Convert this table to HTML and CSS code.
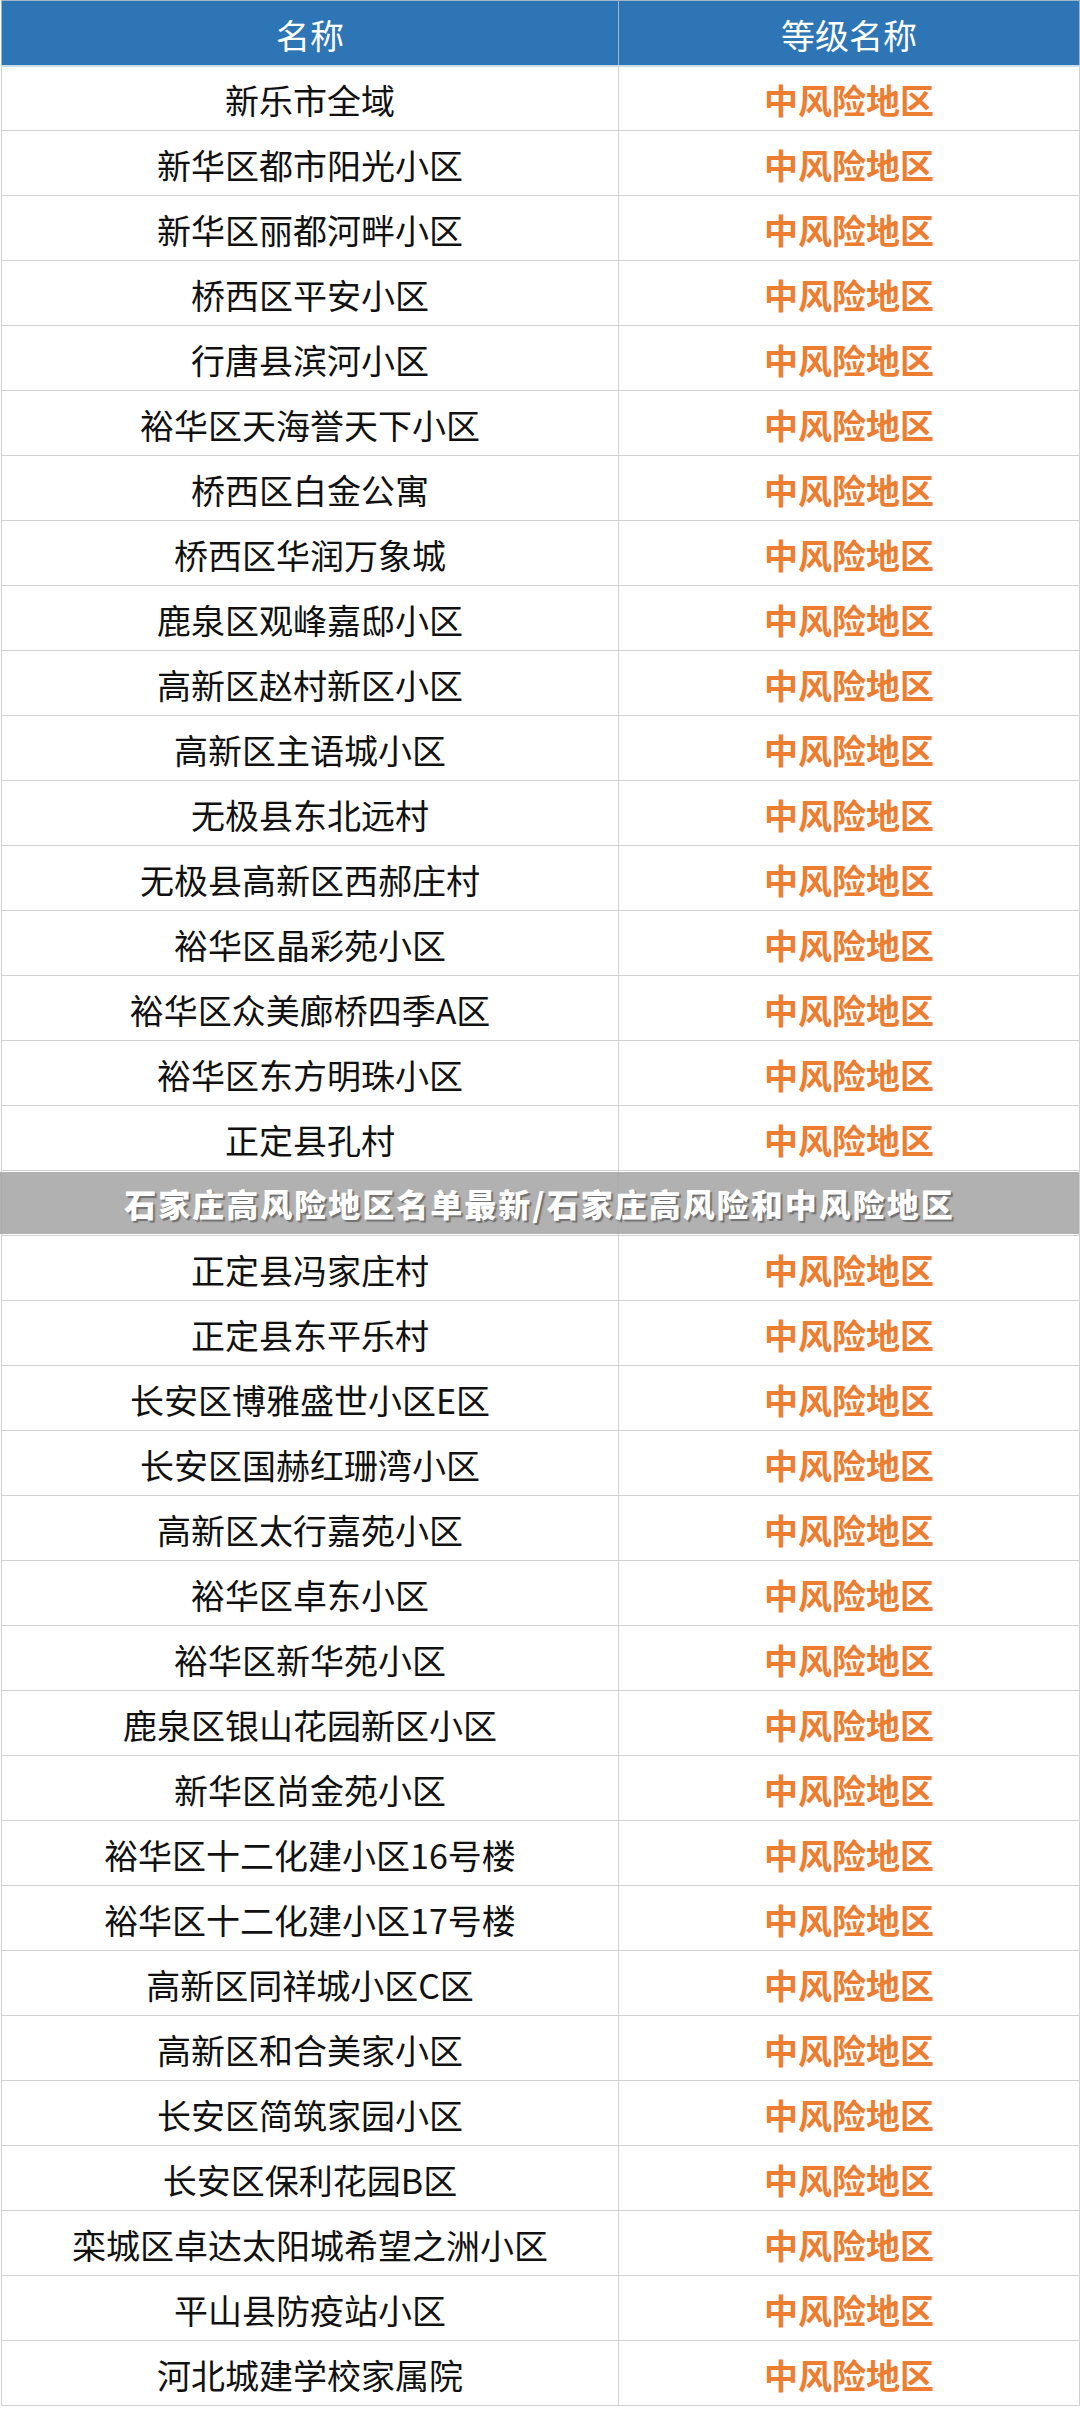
FILE: index.html
```html
<!DOCTYPE html>
<html lang="zh-CN">
<head>
<meta charset="utf-8">
<title>石家庄高风险地区名单</title>
<link rel="stylesheet" href="styles.css">
</head>
<body>
<div class="page">
<table class="risk">
  <colgroup><col class="c-name"><col class="c-level"></colgroup>
  <thead>
    <tr><th>名称</th><th>等级名称</th></tr>
  </thead>
  <tbody>
    <tr><td>新乐市全域</td><td class="lv">中风险地区</td></tr>
    <tr><td>新华区都市阳光小区</td><td class="lv">中风险地区</td></tr>
    <tr><td>新华区丽都河畔小区</td><td class="lv">中风险地区</td></tr>
    <tr><td>桥西区平安小区</td><td class="lv">中风险地区</td></tr>
    <tr><td>行唐县滨河小区</td><td class="lv">中风险地区</td></tr>
    <tr><td>裕华区天海誉天下小区</td><td class="lv">中风险地区</td></tr>
    <tr><td>桥西区白金公寓</td><td class="lv">中风险地区</td></tr>
    <tr><td>桥西区华润万象城</td><td class="lv">中风险地区</td></tr>
    <tr><td>鹿泉区观峰嘉邸小区</td><td class="lv">中风险地区</td></tr>
    <tr><td>高新区赵村新区小区</td><td class="lv">中风险地区</td></tr>
    <tr><td>高新区主语城小区</td><td class="lv">中风险地区</td></tr>
    <tr><td>无极县东北远村</td><td class="lv">中风险地区</td></tr>
    <tr><td>无极县高新区西郝庄村</td><td class="lv">中风险地区</td></tr>
    <tr><td>裕华区晶彩苑小区</td><td class="lv">中风险地区</td></tr>
    <tr><td>裕华区众美廊桥四季A区</td><td class="lv">中风险地区</td></tr>
    <tr><td>裕华区东方明珠小区</td><td class="lv">中风险地区</td></tr>
    <tr><td>正定县孔村</td><td class="lv">中风险地区</td></tr>
    <tr class="covered"><td></td><td class="lv"></td></tr>
    <tr><td>正定县冯家庄村</td><td class="lv">中风险地区</td></tr>
    <tr><td>正定县东平乐村</td><td class="lv">中风险地区</td></tr>
    <tr><td>长安区博雅盛世小区E区</td><td class="lv">中风险地区</td></tr>
    <tr><td>长安区国赫红珊湾小区</td><td class="lv">中风险地区</td></tr>
    <tr><td>高新区太行嘉苑小区</td><td class="lv">中风险地区</td></tr>
    <tr><td>裕华区卓东小区</td><td class="lv">中风险地区</td></tr>
    <tr><td>裕华区新华苑小区</td><td class="lv">中风险地区</td></tr>
    <tr><td>鹿泉区银山花园新区小区</td><td class="lv">中风险地区</td></tr>
    <tr><td>新华区尚金苑小区</td><td class="lv">中风险地区</td></tr>
    <tr><td>裕华区十二化建小区16号楼</td><td class="lv">中风险地区</td></tr>
    <tr><td>裕华区十二化建小区17号楼</td><td class="lv">中风险地区</td></tr>
    <tr><td>高新区同祥城小区C区</td><td class="lv">中风险地区</td></tr>
    <tr><td>高新区和合美家小区</td><td class="lv">中风险地区</td></tr>
    <tr><td>长安区简筑家园小区</td><td class="lv">中风险地区</td></tr>
    <tr><td>长安区保利花园B区</td><td class="lv">中风险地区</td></tr>
    <tr><td>栾城区卓达太阳城希望之洲小区</td><td class="lv">中风险地区</td></tr>
    <tr><td>平山县防疫站小区</td><td class="lv">中风险地区</td></tr>
    <tr><td>河北城建学校家属院</td><td class="lv">中风险地区</td></tr>
  </tbody>
</table>
<div class="banner">石家庄高风险地区名单最新/石家庄高风险和中风险地区</div>
</div>
</body>
</html>
```
FILE: styles.css
```css
html, body {
  margin: 0;
  padding: 0;
  background: #ffffff;
}
body {
  font-family: "Noto Sans CJK SC", "Noto Sans", "Liberation Sans", sans-serif;
}
.page {
  position: relative;
  width: 1080px;
}
.risk {
  margin-left: 1px;
  width: 1078px;
  border-collapse: collapse;
  table-layout: fixed;
  border: 1px solid #d2d2d2;
}
.c-name { width: 617px; }
.c-level { width: 461px; }
.risk th,
.risk td {
  height: 65px;
  padding: 4px 0 0 0;
  box-sizing: border-box;
  text-align: center;
  vertical-align: middle;
  font-size: 34px;
  line-height: 40px;
  border: 1px solid #d2d2d2;
  white-space: nowrap;
}
.risk th {
  background: #2e75b6;
  color: #ffffff;
  font-weight: 400;
  border-color: #9fb6cc;
  border-bottom: 2px solid #c9dcee;
}
.risk td {
  color: #111111;
  font-weight: 400;
}
.risk td.lv {
  color: #ed7d31;
  font-weight: 700;
}
.banner {
  position: absolute;
  left: 0;
  right: 1px;
  top: 1172px;
  height: 62px;
  background: rgba(164, 164, 164, 0.86);
  color: #ffffff;
  font-size: 32px;
  font-weight: 900;
  letter-spacing: 2px;
  line-height: 62px;
  text-align: center;
  text-shadow: 2px 2px 1px rgba(60, 60, 60, 0.55);
  white-space: nowrap;
}
```
